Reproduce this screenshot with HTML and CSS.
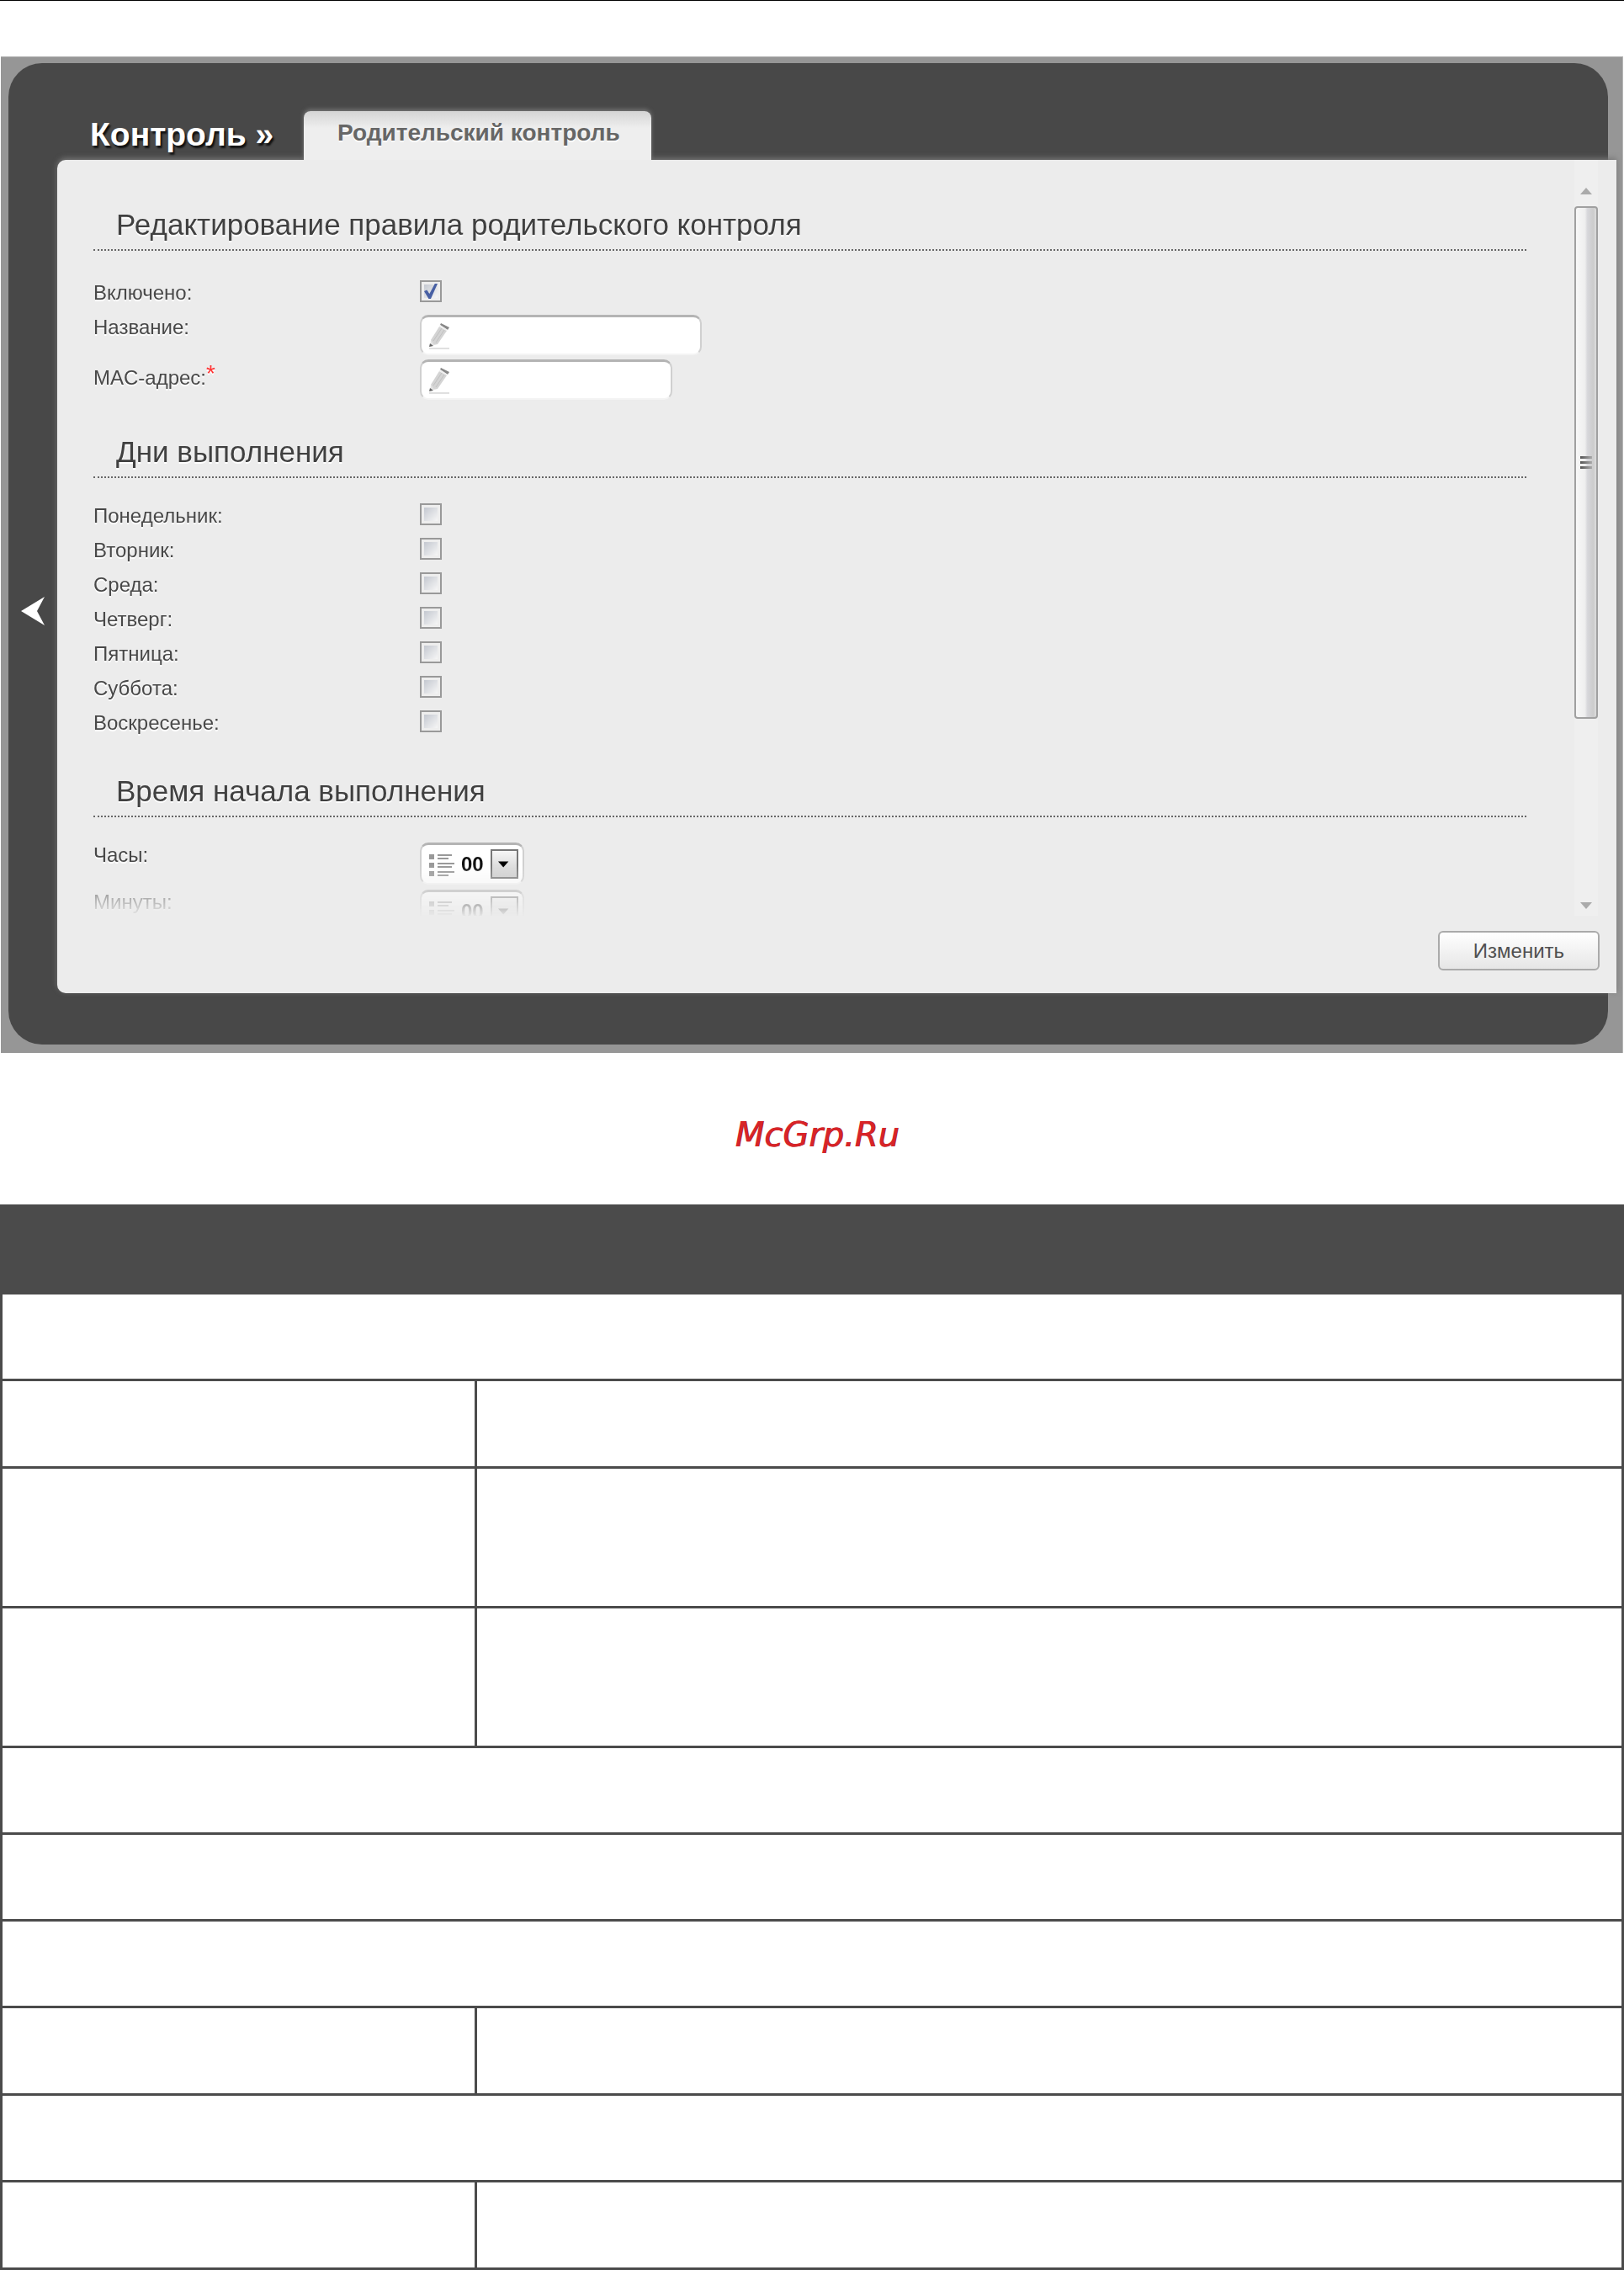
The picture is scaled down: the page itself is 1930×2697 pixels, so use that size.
FILE: index.html
```
<!DOCTYPE html>
<html lang="ru">
<head>
    <meta charset="UTF-8">
    <meta name="viewport" content="width=device-width, initial-scale=1.0">
    <title>Родительский контроль</title>
    <link rel="stylesheet" href="styles.css">
</head>
<body>
    <div class="screen">
        <div class="shell">
            <div class="top">
                <h1>Контроль »</h1>
                <a class="tab" href="#rule">Родительский контроль</a>
            </div>
            <div class="middle">
                <button class="back" type="button" aria-label="Назад">
                    <svg width="28" height="34" viewBox="0 0 28 34"><path d="M0 17 L28 0 L19 17 L28 34 Z" fill="#fff"/></svg>
                </button>
                <form class="panel" id="rule">
                    <div class="view">
                        <div class="fields">
                            <h2>Редактирование правила родительского контроля</h2>
                            <div class="general">
                                <div class="row">
                                    <label for="on">Включено:</label>
                                    <input class="check" type="checkbox" id="on" checked>
                                </div>
                                <div class="row row-name">
                                    <label for="name">Название:</label>
                                    <span class="field">
                                        <svg class="pencil" width="26" height="32" viewBox="0 0 26 32"><path d="M3 20 L13 4 L22 9 L11 25 L6 26 Z" fill="#d4d4d4"/><path d="M6 21 L16 6 M9 23 L19 8" stroke="#c0c0c0" fill="none"/><path d="M14 2 L15 0 L25 5 L23 8 Z" fill="#888"/><path d="M13 4 L14 2 L23 8 L22 9 Z" fill="#eee"/><path d="M3 20 L7 26 L2 28 Z" fill="#e4e4e4"/><path d="M2 24 L6 27 L1 28 Z" fill="#666"/><path d="M1 30 H25" stroke="#e0e0e0" stroke-width="2"/></svg>
                                        <input type="text" id="name">
                                    </span>
                                </div>
                                <div class="row row-mac">
                                    <label for="mac">MAC-адрес:<sup>*</sup></label>
                                    <span class="field field-mac">
                                        <svg class="pencil" width="26" height="32" viewBox="0 0 26 32"><path d="M3 20 L13 4 L22 9 L11 25 L6 26 Z" fill="#d4d4d4"/><path d="M6 21 L16 6 M9 23 L19 8" stroke="#c0c0c0" fill="none"/><path d="M14 2 L15 0 L25 5 L23 8 Z" fill="#888"/><path d="M13 4 L14 2 L23 8 L22 9 Z" fill="#eee"/><path d="M3 20 L7 26 L2 28 Z" fill="#e4e4e4"/><path d="M2 24 L6 27 L1 28 Z" fill="#666"/><path d="M1 30 H25" stroke="#e0e0e0" stroke-width="2"/></svg>
                                        <input type="text" id="mac">
                                    </span>
                                </div>
                            </div>

                            <h2>Дни выполнения</h2>
                            <div class="days">
                                <div class="row"><label for="d1">Понедельник:</label><input class="check" type="checkbox" id="d1"></div>
                                <div class="row"><label for="d2">Вторник:</label><input class="check" type="checkbox" id="d2"></div>
                                <div class="row"><label for="d3">Среда:</label><input class="check" type="checkbox" id="d3"></div>
                                <div class="row"><label for="d4">Четверг:</label><input class="check" type="checkbox" id="d4"></div>
                                <div class="row"><label for="d5">Пятница:</label><input class="check" type="checkbox" id="d5"></div>
                                <div class="row"><label for="d6">Суббота:</label><input class="check" type="checkbox" id="d6"></div>
                                <div class="row"><label for="d7">Воскресенье:</label><input class="check" type="checkbox" id="d7"></div>
                            </div>

                            <h2>Время начала выполнения</h2>
                            <div class="row row-time">
                                <label for="hours">Часы:</label>
                                <span class="pick">
                                    <svg class="list" width="30" height="28" viewBox="0 0 30 28" fill="#999"><path d="M0 1h6v6H0zM0 11h6v6H0zM0 21h6v6H0zM10 1h17v2H10zM10 5h13v2H10zM10 11h20v2H10zM10 15h17v2H10zM10 21h20v2H10zM10 25h13v2H10z"/></svg>
                                    <select id="hours"><option>00</option></select>
                                    <svg class="drop" width="33" height="35" viewBox="0 0 33 35"><path d="M8 14h14l-7 8z" fill="#000"/></svg>
                                </span>
                            </div>
                            <div class="row row-time">
                                <label for="minutes">Минуты:</label>
                                <span class="pick">
                                    <svg class="list" width="30" height="28" viewBox="0 0 30 28" fill="#999"><path d="M0 1h6v6H0zM0 11h6v6H0zM0 21h6v6H0zM10 1h17v2H10zM10 5h13v2H10zM10 11h20v2H10zM10 15h17v2H10zM10 21h20v2H10zM10 25h13v2H10z"/></svg>
                                    <select id="minutes"><option>00</option></select>
                                    <svg class="drop" width="33" height="35" viewBox="0 0 33 35"><path d="M8 14h14l-7 8z" fill="#000"/></svg>
                                </span>
                            </div>
                        </div>
                        <div class="scroll">
                            <svg width="14" height="8" viewBox="0 0 14 8"><path d="M0 8 L7 0 L14 8 Z" fill="#aaa"/></svg>
                            <div class="thumb"><i></i><i></i><i></i></div>
                            <svg class="down" width="14" height="8" viewBox="0 0 14 8"><path d="M0 0 L7 8 L14 0 Z" fill="#aaa"/></svg>
                        </div>
                    </div>
                    <div class="actions"><button class="save" type="button">Изменить</button></div>
                </form>
            </div>
        </div>
    </div>

    <p class="mark">McGrp.Ru</p>

    <table class="params">
        <colgroup><col class="col-name"><col></colgroup>
        <thead>
            <tr><th colspan="2"></th></tr>
        </thead>
        <tbody>
            <tr class="wide"><td colspan="2"></td></tr>
            <tr><td></td><td></td></tr>
            <tr class="tall"><td></td><td></td></tr>
            <tr class="tall"><td></td><td></td></tr>
            <tr class="wide"><td colspan="2"></td></tr>
            <tr class="wide"><td colspan="2"></td></tr>
            <tr class="wide"><td colspan="2"></td></tr>
            <tr><td></td><td></td></tr>
            <tr class="wide"><td colspan="2"></td></tr>
            <tr><td></td><td></td></tr>
        </tbody>
    </table>
</body>
</html>
```
FILE: styles.css
```
*{
    padding: 0;
    margin: 0;
    box-sizing: border-box;
}
body{
    border-top: 1px solid #000;
    background-color: #fff;
    font: 24px/32px "Liberation Sans", Arial, sans-serif;
    color: #484848;
}
/* серая подложка */
.screen{
    margin: 66px 1px 0;
    padding: 7px 17px 10px 9px;
    background-color: #969696;
    border-top: 1px solid #b0b0b0;
    border-right: 1px solid #b8b8b8;
}
.shell{
    padding-bottom: 61px;
    border-radius: 40px;
    background-color: #484848;
}
/* заголовок и вкладка */
.top{
    display: flex;
    height: 115px;
    padding-left: 97px;
    align-items: flex-end;
}
h1{
    width: 254px;
    padding-bottom: 8px;
    font-size: 39px;
    line-height: 44px;
    color: #fff;
    text-shadow: 2px 3px 2px #111;
    white-space: nowrap;
}
.tab{
    position: relative;
    z-index: 1;
    height: 58px;
    padding: 10px 37px 0 40px;
    border-radius: 8px 8px 0 0;
    background: linear-gradient(#d4d4d4, #eee 20px);
    box-shadow: 0 -2px 5px #777;
    clip-path: inset(-8px -8px 0);
    font-size: 28px;
    font-weight: bold;
    color: #666;
    text-decoration: none;
    text-shadow: 0 2px 0 #fff;
}
.middle{
    display: flex;
    margin-right: -10px;
}
.back{
    width: 58px;
    flex: none;
    padding-top: 84px;
    border: 0;
    background: none;
}
.panel{
    flex: 1;
    height: 990px;
    border-radius: 10px 0 0 10px;
    background-color: #ececec;
    box-shadow: 0 -2px 6px #777;
}
.view{
    display: flex;
    height: 898px;
    padding: 0 22px 0 43px;
    overflow: hidden;
}
/* нижние строки плавно исчезают */
.fields{
    flex: 1;
    margin-right: 57px;
    padding-top: 20px;
    -webkit-mask-image: linear-gradient(#000 838px, transparent 900px);
    mask-image: linear-gradient(#000 838px, transparent 900px);
}
h2{
    height: 88px;
    margin-bottom: 25px;
    padding: 35px 0 0 27px;
    border-bottom: 2px dotted #666;
    font-size: 35px;
    line-height: 44px;
    font-weight: normal;
    color: #404040;
    text-shadow: 0 2px 0 #fff;
}
.general{
    padding-top: 5px;
}
.days{
    padding-bottom: 3px;
}
.row{
    display: flex;
    height: 41px;
    align-items: flex-start;
    text-shadow: 0 2px 0 #fff;
}
.row label{
    width: 388px;
    padding-top: 4px;
}
.row sup{
    font-size: 28px;
    line-height: 0;
    vertical-align: 4px;
    color: #f33;
}
.row-name{
    height: 53px;
}
.row-mac{
    height: 58px;
}
.row-mac label{
    padding-top: 11px;
}
.row-time{
    height: 56px;
}
.check{
    appearance: none;
    width: 26px;
    height: 26px;
    margin-top: 5px;
    border: 2px solid #999;
    background: linear-gradient(135deg, #c4c8d0, #f6f6f6) center / 16px 16px no-repeat #eee;
}
/* галочка */
.check:checked::before{
    content: "";
    display: block;
    width: 16px;
    height: 18px;
    margin: 2px 3px;
    background-color: #4860a4;
    clip-path: polygon(0 50%, 20% 42%, 40% 66%, 80% 0, 100% 0, 50% 100%, 34% 100%);
}
.field,
.pick{
    display: flex;
    height: 48px;
    margin-top: 5px;
    border: 2px solid #d0d0d0;
    border-top: 3px solid #b4b4b4;
    border-bottom-color: #f4f4f4;
    border-radius: 10px;
    background-color: #fff;
}
.field{
    width: 335px;
    padding: 7px 8px 0;
}
.field-mac{
    width: 300px;
}
.field input{
    width: 100%;
    height: 32px;
    border: 0;
    background: none;
    font: inherit;
    outline: none;
}
.pencil{
    flex: none;
}
.pick{
    width: 124px;
    height: 50px;
    padding: 5px 4px 0 9px;
    gap: 8px;
}
.pick svg{
    flex: none;
}
.list{
    margin-top: 5px;
}
.pick select{
    appearance: none;
    width: 27px;
    height: 36px;
    border: 0;
    background: none;
    font: bold 24px/36px "Liberation Sans", Arial, sans-serif;
    color: #111;
}
.drop{
    border: 2px solid #777;
    background: linear-gradient(#f6f6f6, #ccc);
}
/* полоса прокрутки */
.scroll{
    display: flex;
    width: 28px;
    flex-direction: column;
    align-items: center;
    padding: 33px 0 8px;
    background-color: #efefef;
}
.thumb{
    display: flex;
    width: 28px;
    height: 609px;
    margin-top: 14px;
    flex-direction: column;
    align-items: center;
    justify-content: center;
    gap: 3px;
    border: 2px solid #a0a0a0;
    border-radius: 4px;
    background: linear-gradient(90deg, #f8f8f8, #eee 45%, #d8d8dc 55%, #ccc 85%, #ddd);
}
.thumb i{
    width: 14px;
    height: 3px;
    background: linear-gradient(90deg, #555, #aaa);
}
.down{
    margin-top: auto;
}
.actions{
    display: flex;
    justify-content: flex-end;
    padding: 18px 20px 0 0;
}
.save{
    width: 192px;
    height: 47px;
    border: 2px solid #aaa;
    border-radius: 6px;
    background: linear-gradient(#fff, #e6e6e6);
    font: inherit;
    color: #505050;
}
.mark{
    margin: 75px 0 61px;
    padding-left: 12px;
    font: italic 40px/44px "DejaVu Sans", sans-serif;
    color: #d82428;
    text-align: center;
    text-shadow: 1px 0 0 #a02028;
}
.params{
    width: 100%;
    border: 3px solid #4b4b4b;
    border-collapse: collapse;
    table-layout: fixed;
}
.params .col-name{
    width: 564px;
}
.params th{
    height: 104px;
    background-color: #4b4b4b;
}
.params td{
    height: 104px;
    border: 3px solid #4b4b4b;
}
.params .wide td{
    height: 103px;
}
.params .tall td{
    height: 166px;
}
```
